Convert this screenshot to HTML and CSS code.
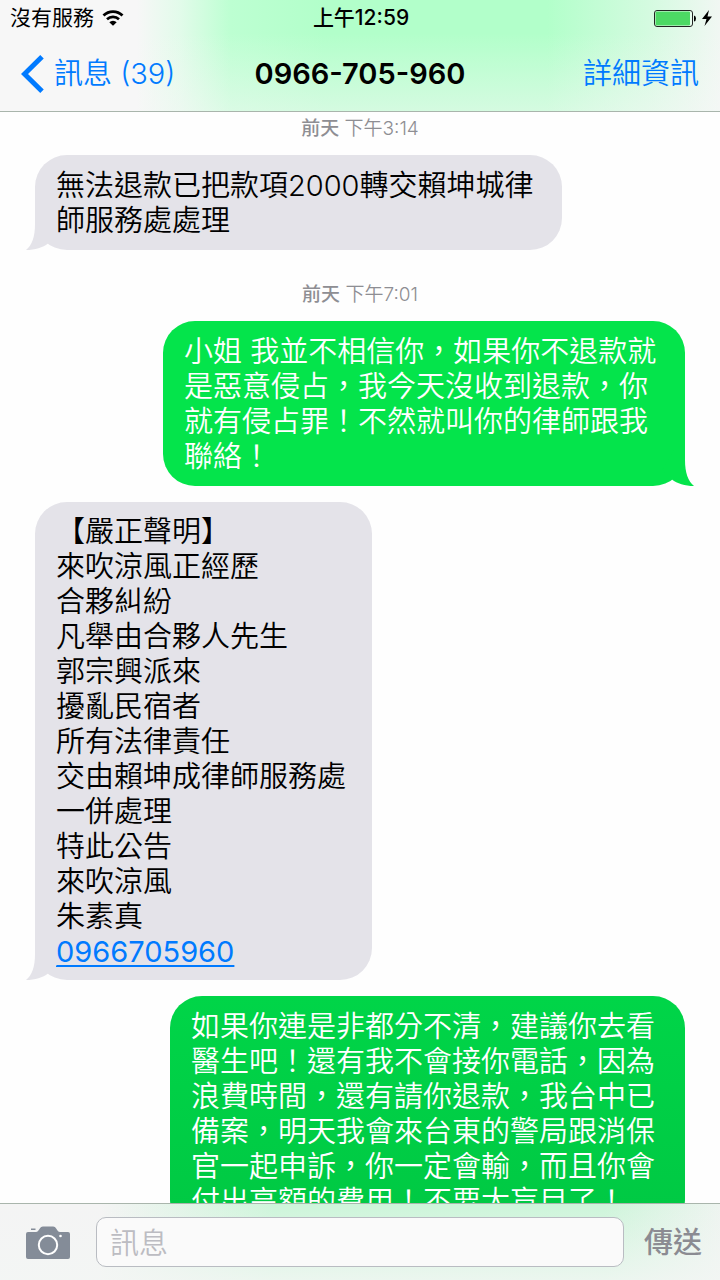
FILE: index.html
```html
<!DOCTYPE html>
<html lang="zh-Hant">
<head>
<meta charset="utf-8">
<meta name="viewport" content="width=device-width, initial-scale=1">
<title>0966-705-960</title>
<link rel="stylesheet" href="styles.css">
</head>
<body>
<div class="app">
  <header class="header">
    <div class="status">
      <div class="status-left">
        <span>沒有服務</span>
        <svg class="wifi" viewBox="0 0 22 16" aria-hidden="true">
          <path d="M1.500 5.500A13.500 13.500 0 0 1 20.500 5.500" fill="none" stroke="#000" stroke-width="2.800"/>
          <path d="M5 9.300A8.600 8.600 0 0 1 17 9.300" fill="none" stroke="#000" stroke-width="2.600"/>
          <path d="M7.300 12.200A5.200 5.200 0 0 1 14.700 12.200L11 15.800Z"/>
        </svg>
      </div>
      <span class="clock">上午12:59</span>
      <div class="status-right">
        <svg class="battery" viewBox="0 0 42 17" aria-hidden="true">
          <rect x=".5" y=".5" width="38" height="16" rx="2.500" fill="#e9fff0" stroke="#222"/>
          <rect x="1.500" y="1.500" width="34.500" height="14" rx="1" fill="#4cd964"/>
          <path d="M40 5.500Q42 6 42 8.500T40 11.500Z"/>
        </svg>
        <svg class="bolt" viewBox="0 0 10 16" aria-hidden="true"><path d="M7 0L0 9H4.500L2.500 16L10 6.500H5.500Z"/></svg>
      </div>
    </div>
    <nav class="nav">
      <a class="back" href="#messages">
        <svg class="chevron" viewBox="0 0 23 38" aria-hidden="true"><path d="M21 1.800L3.500 19L21 36.200" fill="none" stroke="#007aff" stroke-width="5"/></svg>
        <span>訊息 (39)</span>
      </a>
      <h1 class="title">0966-705-960</h1>
      <a class="details" href="#details">詳細資訊</a>
    </nav>
  </header>

  <main class="thread">
    <p class="stamp"><b>前天</b> 下午3:14</p>
    <div class="bubble received wide">
      無法退款已把款項2000轉交賴坤城律<br>師服務處處理
      <svg class="tail" viewBox="0 0 32 36" aria-hidden="true"><path d="M9 0V10C9 23 6 31 0 36C9 36 17 33.500 22 29.500L32 20L20 0Z"/></svg>
    </div>
    <p class="stamp later"><b>前天</b> 下午7:01</p>
    <div class="bubble sent">
      小姐 我並不相信你，如果你不退款就<br>是惡意侵占，我今天沒收到退款，你<br>就有侵占罪！不然就叫你的律師跟我<br>聯絡！
      <svg class="tail" viewBox="0 0 32 36" aria-hidden="true"><path d="M9 0V10C9 23 6 31 0 36C9 36 17 33.500 22 29.500L32 20L20 0Z"/></svg>
    </div>
    <div class="bubble received notice">
      【嚴正聲明】<br>來吹涼風正經歷<br>合夥糾紛<br>凡舉由合夥人先生<br>郭宗興派來<br>擾亂民宿者<br>所有法律責任<br>交由賴坤成律師服務處<br>一併處理<br>特此公告<br>來吹涼風<br>朱素真<br><a class="phone" href="tel:0966705960">0966705960</a>
      <svg class="tail" viewBox="0 0 32 36" aria-hidden="true"><path d="M9 0V10C9 23 6 31 0 36C9 36 17 33.500 22 29.500L32 20L20 0Z"/></svg>
    </div>
    <div class="bubble sent latest">
      如果你連是非都分不清，建議你去看<br>醫生吧！還有我不會接你電話，因為<br>浪費時間，還有請你退款，我台中已<br>備案，明天我會來台東的警局跟消保<br>官一起申訴，你一定會輸，而且你會<br>付出高額的費用！不要太盲目了！
    </div>
  </main>

  <form class="composer">
    <button class="camera" type="button" aria-label="相機">
      <svg viewBox="0 0 44 33" aria-hidden="true">
        <path d="M5 2.500H9.500V4H5Z" fill="#848c98"/>
        <path d="M2 6H10C13 6 13.500 .5 17 .5H27C30.500 .5 31 6 34 6H42Q44 6 44 8V31Q44 33 42 33H2Q0 33 0 31V8Q0 6 2 6Z" fill="#848c98"/>
        <circle cx="22" cy="19" r="9.200" fill="none" stroke="#fff" stroke-width="2"/>
        <circle cx="34.500" cy="10" r="1.300" fill="#fff"/>
      </svg>
    </button>
    <input class="field" type="text" placeholder="訊息" aria-label="訊息">
    <button class="send" type="submit">傳送</button>
  </form>
</div>
</body>
</html>
```
FILE: styles.css
```css
* {
  box-sizing: border-box;
}

body {
  margin: 0;
  background: #fefefe;
  color: #000;
  font-family: Inter, "Noto Sans CJK TC", sans-serif;
  font-weight: 350;
}

.app {
  display: flex;
  flex-direction: column;
  height: 100vh;
}

.header {
  flex: none;
  border-bottom: 1px solid #a9b5ac;
  background:
    linear-gradient(to bottom, rgba(247, 247, 247, 0) 30%, rgba(247, 247, 247, 0.5) 100%),
    linear-gradient(to right, #f7f7f7 19%, #e2fbea 25%, #bdffd2 32%, #b2ffca 45%, #b2ffca 76%, #d4fbe0 90%, #f1f7f3 100%);
}

.status {
  display: grid;
  grid-template-columns: 1fr auto 1fr;
  align-items: center;
  height: 36px;
  padding: 0 8px 0 10px;
  font-size: 21px;
  font-weight: 400;
  line-height: 24px;
}

.status-left,
.status-right {
  display: flex;
  align-items: center;
}

.status-left {
  gap: 8px;
}

.status-right {
  justify-content: flex-end;
  gap: 6px;
}

.clock {
  font-weight: 500;
}

.wifi {
  width: 22px;
  height: 16px;
}

.battery {
  width: 42px;
  height: 17px;
}

.bolt {
  width: 10px;
  height: 16px;
}

.nav {
  display: grid;
  grid-template-columns: 1fr auto 1fr;
  align-items: center;
  height: 75px;
  padding: 0 21px;
  font-size: 29px;
  line-height: 35px;
}

.nav a {
  color: #007aff;
  text-decoration: none;
}

.back {
  display: flex;
  align-items: center;
  gap: 10px;
  white-space: nowrap;
}

.chevron {
  width: 23px;
  height: 38px;
}

.title {
  margin: 0;
  font-size: 29px;
  font-weight: 600;
}

.details {
  justify-self: end;
}

.thread {
  display: flex;
  flex: 1;
  flex-direction: column;
  min-height: 0;
  padding: 5px 35px 0;
  overflow: hidden;
}

.thread > * {
  flex: none;
}

.stamp {
  margin: 0 0 14px;
  color: #8e8e93;
  font-size: 19px;
  line-height: 24px;
  text-align: center;
}

.stamp b {
  font-weight: 500;
}

.later {
  margin: 33px 0 14px;
}

.bubble {
  position: relative;
  min-width: 337px;
  padding: 13px 21px 12px;
  border-radius: 32px;
  font-size: 29px;
  line-height: 35px;
  white-space: nowrap;
}

.received {
  align-self: flex-start;
  background: #e4e3e9;
  color: #000;
}

.wide {
  min-width: 527px;
}

.sent {
  align-self: flex-end;
  min-width: 522px;
  background: #04e44b;
  color: #fff;
}

.notice {
  margin: 16px 0;
  padding: 12px 21px 11px;
}

.latest {
  min-width: 515px;
  background: linear-gradient(#00d548, #00c843);
}

.phone {
  color: #007aff;
  font-weight: 400;
  text-decoration-thickness: 2px;
  text-underline-offset: 3px;
}

.tail {
  position: absolute;
  bottom: 0;
  left: -9px;
  width: 32px;
  height: 36px;
  fill: #e4e3e9;
}

.sent .tail {
  right: -9px;
  left: auto;
  transform: scaleX(-1);
  fill: #04e44b;
}

.composer {
  display: flex;
  flex: none;
  align-items: center;
  gap: 20px;
  padding: 13px 18px 13px 26px;
  border-top: 1px solid #a9b5ac;
  background:
    linear-gradient(to bottom, rgba(243, 246, 244, 0) 0%, rgba(243, 246, 244, 0.8) 100%),
    linear-gradient(to right, #f4f4f4 14%, #cdf5da 38%, #cdf5da 84%, #eef4f0 100%);
}

.camera,
.send {
  padding: 0;
  border: 0;
  background: none;
  font-family: inherit;
}

.camera {
  width: 44px;
  height: 33px;
  margin-right: 6px;
}

.camera svg {
  display: block;
  width: 100%;
  height: 100%;
}

.field {
  flex: 1;
  min-width: 0;
  height: 50px;
  padding: 2px 13px 0;
  border: 1px solid #b9bcc2;
  border-radius: 10px;
  background: #fafafa;
  font-family: inherit;
  font-size: 29px;
  font-weight: 350;
}

.field::placeholder {
  color: #bcbcc2;
}

.send {
  color: #8b8b92;
  font-size: 29px;
  font-weight: 500;
  line-height: 35px;
}
```
